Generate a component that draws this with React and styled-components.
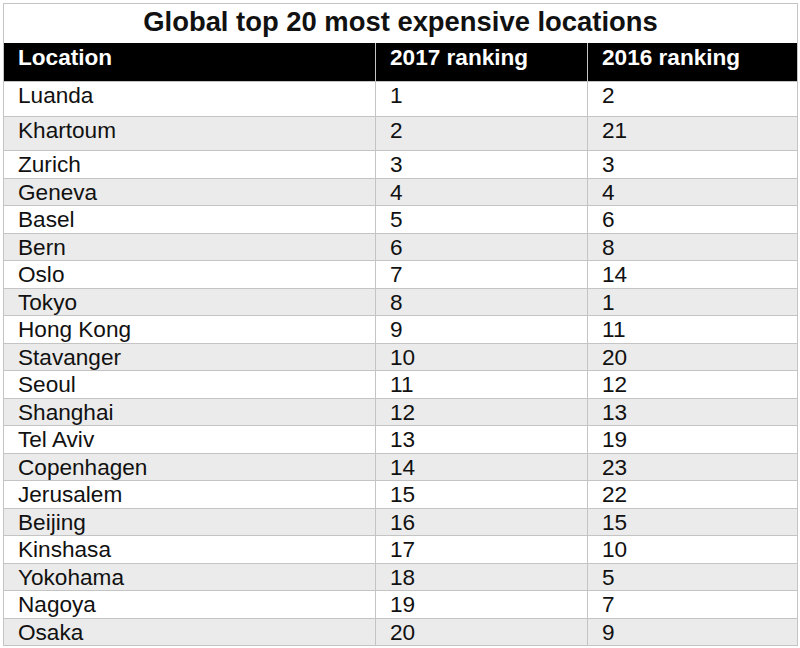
import React from "react";
import styled, { createGlobalStyle } from "styled-components";

const Global = createGlobalStyle`
  html, body { margin: 0; padding: 0; background: #ffffff; }
  body { font-family: "Liberation Sans", Arial, sans-serif; color: #111; }
`;

const Page = styled.div`
  padding: 3px 0 0 3px;
  width: 800px;
  box-sizing: border-box;
`;

const Table = styled.table`
  width: 794px;
  border-collapse: collapse;
  table-layout: fixed;
  font-family: "Liberation Sans", Arial, sans-serif;
`;

const TitleCell = styled.th`
  height: 39px;
  padding: 0;
  border: 1px solid #c4c4c4;
  border-bottom: none;
  background: #fff;
  font-size: 27.4px;
  font-weight: 700;
  color: #111;
  text-align: center;
  vertical-align: top;
  line-height: 36px;
`;

const HeadRow = styled.tr`
  height: 38px;
  background: #000;
`;

const HeadCell = styled.th`
  padding: 2px 0 0 14px;
  border-left: 1px solid #c4c4c4;
  border-right: 1px solid #c4c4c4;
  font-size: 22.6px;
  font-weight: 700;
  color: #fff;
  text-align: left;
  vertical-align: top;
  line-height: 25px;
`;

const Row = styled.tr`
  height: ${(p) => p.$h}px;
  background: ${(p) => (p.$shade ? "#ebebeb" : "#ffffff")};
`;

const Cell = styled.td`
  padding: 1px 0 0 14px;
  border: 1px solid #c4c4c4;
  font-size: 22.6px;
  color: #111;
  vertical-align: top;
  line-height: 25px;
  white-space: nowrap;
`;

const data = [
  ["Luanda", 1, 2],
  ["Khartoum", 2, 21],
  ["Zurich", 3, 3],
  ["Geneva", 4, 4],
  ["Basel", 5, 6],
  ["Bern", 6, 8],
  ["Oslo", 7, 14],
  ["Tokyo", 8, 1],
  ["Hong Kong", 9, 11],
  ["Stavanger", 10, 20],
  ["Seoul", 11, 12],
  ["Shanghai", 12, 13],
  ["Tel Aviv", 13, 19],
  ["Copenhagen", 14, 23],
  ["Jerusalem", 15, 22],
  ["Beijing", 16, 15],
  ["Kinshasa", 17, 10],
  ["Yokohama", 18, 5],
  ["Nagoya", 19, 7],
  ["Osaka", 20, 9],
];

const heightFor = (i) => {
  if (i === 0) return 35;
  if (i === 1) return 34;
  return i % 2 === 0 ? 28 : 27;
};

export default function App() {
  return (
    <Page>
      <Global />
      <Table>
        <colgroup>
          <col style={{ width: 372 }} />
          <col style={{ width: 212 }} />
          <col style={{ width: 210 }} />
        </colgroup>
        <thead>
          <tr>
            <TitleCell colSpan={3}>Global top 20 most expensive locations</TitleCell>
          </tr>
          <HeadRow>
            <HeadCell>Location</HeadCell>
            <HeadCell>2017 ranking</HeadCell>
            <HeadCell>2016 ranking</HeadCell>
          </HeadRow>
        </thead>
        <tbody>
          {data.map(([city, a, b], i) => (
            <Row key={city} $h={heightFor(i)} $shade={i % 2 === 1}>
              <Cell>{city}</Cell>
              <Cell>{a}</Cell>
              <Cell>{b}</Cell>
            </Row>
          ))}
        </tbody>
      </Table>
    </Page>
  );
}
